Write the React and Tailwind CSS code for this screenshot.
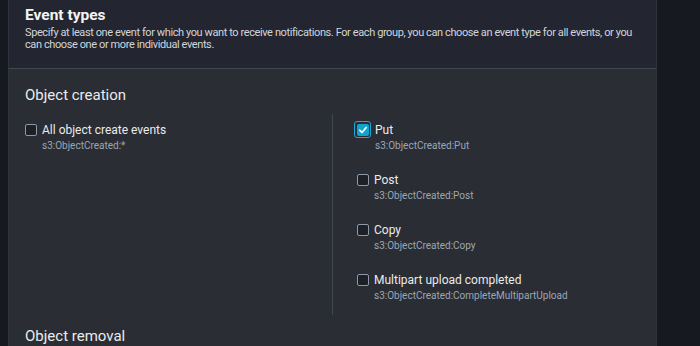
import React from 'react';

const font = { fontFamily: 'Roboto, "Noto Sans", sans-serif' };

function Box({ checked }) {
    if (checked) {
        return (
            <span className="-ml-[3px] flex h-[17px] w-[17px] shrink-0 items-center justify-center rounded-[3px] border-[1.5px] border-[#1fa7d6] bg-[#2a2d33]">
                <span className="flex h-[12px] w-[12px] items-center justify-center rounded-[2px] bg-[#10a5d0]">
                    <svg width="10" height="10" viewBox="0 0 10 10" fill="none">
                        <path d="M1.8 5.2 L4 7.4 L8.2 2.4" stroke="#fff" strokeWidth="1.6" strokeLinecap="round" strokeLinejoin="round" />
                    </svg>
                </span>
            </span>
        );
    }
    return <span className="mt-[3px] h-[12px] w-[12px] shrink-0 rounded-[2px] border border-[#8d99a8] bg-[#1d2027]" />;
}

function Option({ label, code, checked }) {
    return (
        <div className={checked ? 'flex gap-[4px]' : 'flex gap-[5px]'}>
            <Box checked={checked} />
            <div>
                <div className="text-[12px] leading-[18px] text-[#e9ebed]">{label}</div>
                <div className="text-[10px] leading-[14px] text-[#9ba7b6]">{code}</div>
            </div>
        </div>
    );
}

export default function App() {
    return (
        <div className="flex h-[346px] w-[700px] overflow-hidden bg-[#16191f]" style={font}>
            <div className="w-[8px] shrink-0 bg-[#16191f]" />
            <div className="w-[649px] shrink-0 border-x border-[#2f343c] bg-[#2a2d33]">
                <div className="h-[69px] border-b border-[#414750] bg-[#232630] px-[16px] pt-[3px]">
                    <h2 className="text-[15.5px] font-bold leading-[24px] text-[#f2f3f3]">Event types</h2>
                    <p className="text-[11px] leading-[12px] tracking-[-0.4px] text-[#d1d5db]">
                        <span className="block whitespace-nowrap">
                            Specify at least one event for which you want to receive notifications. For each group, you can choose an event type for all events, or you
                        </span>
                        <span className="block">can choose one or more individual events.</span>
                    </p>
                </div>
                <div className="px-[16px] pt-[15px]">
                    <h3 className="text-[15px] leading-[22px] text-[#e9ebed]">Object creation</h3>
                    <div className="mt-[8px] grid h-[201px] grid-cols-[308px_1fr]">
                        <div className="border-r border-[#414750] pt-[7px]">
                            <Option label="All object create events" code="s3:ObjectCreated:*" />
                        </div>
                        <div className="flex flex-col gap-[18px] pl-[24px] pt-[7px]">
                            <Option label="Put" code="s3:ObjectCreated:Put" checked />
                            <Option label="Post" code="s3:ObjectCreated:Post" />
                            <Option label="Copy" code="s3:ObjectCreated:Copy" />
                            <Option label="Multipart upload completed" code="s3:ObjectCreated:CompleteMultipartUpload" />
                        </div>
                    </div>
                    <h3 className="mt-[10px] text-[15px] leading-[22px] text-[#e9ebed]">Object removal</h3>
                </div>
            </div>
            <div className="flex-1 bg-[#16191f]" />
        </div>
    );
}
